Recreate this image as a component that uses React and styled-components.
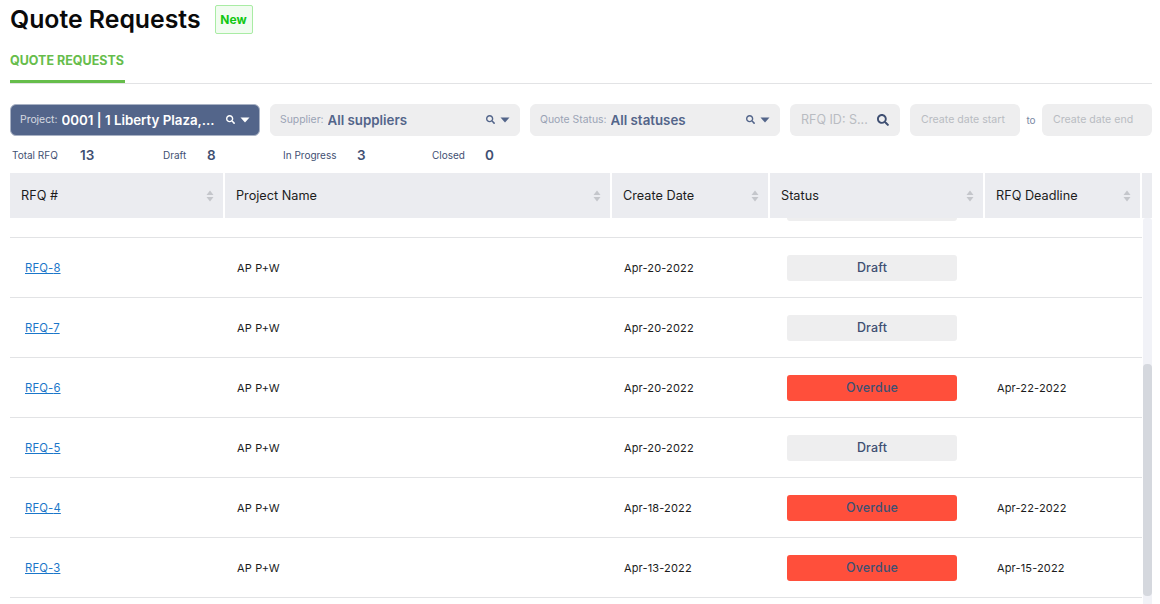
import React, { useLayoutEffect, useRef } from "react";
import styled, { createGlobalStyle } from "styled-components";
import { FaSearch } from "react-icons/fa";

const GlobalStyle = createGlobalStyle`
  html, body { margin: 0; padding: 0; background: #fff; overflow: hidden; }
  body { font-family: Inter, "Liberation Sans", sans-serif; }
`;

const Page = styled.div`
  width: 1142px;
  height: 604px;
  padding-left: 10px;
  overflow: hidden;
`;

const TitleRow = styled.div`
  display: flex;
  align-items: center;
  height: 39px;
`;

const Title = styled.h1`
  margin: 0 0 2px;
  font-size: 24.8px;
  line-height: 36px;
  font-weight: 600;
  color: #0a0a0a;
`;

const NewTag = styled.span`
  margin-left: 14px;
  width: 38px;
  height: 29px;
  box-sizing: border-box;
  display: flex;
  align-items: center;
  justify-content: center;
  background: #f1fcf0;
  border: 1px solid #a9eca4;
  border-radius: 2px;
  color: #12c712;
  font-size: 12px;
  font-weight: 700;
`;

const Tabs = styled.div`
  height: 44px;
  border-bottom: 1px solid #e2e3e5;
  display: flex;
`;

const Tab = styled.div`
  height: 44px;
  box-sizing: border-box;
  padding-top: 14px;
  border-bottom: 3px solid #66bd4b;
  color: #66bd4b;
  font-size: 12.5px;
  line-height: 16px;
  font-weight: 700;
  width: 115px;
  white-space: nowrap;
`;

const Filters = styled.div`
  display: flex;
  align-items: center;
  margin-top: 19px;
  height: 33px;
`;

const Select = styled.div`
  width: ${(p) => p.$w}px;
  height: 32px;
  margin-right: 10px;
  box-sizing: border-box;
  border-radius: 6px;
  padding: 0 9px;
  display: flex;
  align-items: center;
  white-space: nowrap;
  background: ${(p) => (p.$active ? "#53658a" : "#eeeeef")};
  border: 1px solid ${(p) => (p.$active ? "#a9b2c4" : "#eeeeef")};
  color: ${(p) => (p.$active ? "#fff" : "#53658a")};
`;

const SelectLabel = styled.span`
  font-size: 10.4px;
  margin-right: 4px;
  opacity: ${(p) => (p.$active ? 0.75 : 1)};
  color: ${(p) => (p.$active ? "#fff" : "#9aa3b5")};
`;

const SelectValue = styled.span`
  font-size: 13.3px;
  font-weight: 600;
  flex: 1;
  overflow: hidden;
`;

const SearchIcon = styled(FaSearch)`
  width: 9px;
  height: 9px;
  margin-right: 5px;
  flex-shrink: 0;
`;

const Caret = styled.svg`
  width: 10px;
  height: 6px;
  fill: currentColor;
  flex-shrink: 0;
`;

const IdInput = styled.div`
  width: 110px;
  height: 32px;
  margin-right: 10px;
  box-sizing: border-box;
  border-radius: 6px;
  background: #eeeeef;
  padding: 0 11px;
  display: flex;
  align-items: center;
  justify-content: space-between;
  font-size: 12.5px;
  color: #b9bcc2;
  svg { width: 12px; height: 12px; color: #3f4f72; }
`;

const DateInput = styled.div`
  width: 110px;
  height: 32px;
  box-sizing: border-box;
  border-radius: 6px;
  background: #eeeeef;
  padding-left: 11px;
  display: flex;
  align-items: center;
  font-size: 10.6px;
  color: #b9bcc2;
  white-space: nowrap;
`;

const To = styled.span`
  width: 22px;
  text-align: center;
  font-size: 10px;
  color: #7b88a3;
`;

const Stats = styled.div`
  display: flex;
  align-items: center;
  height: 37px;
  padding-left: 2px;
`;

const Stat = styled.div`
  width: ${(p) => p.$w}px;
  display: flex;
  align-items: center;
  color: #3f4f72;
`;

const StatLabel = styled.span`
  font-size: 10px;
  width: ${(p) => p.$w}px;
`;

const StatValue = styled.span`
  font-size: 13.5px;
  font-weight: 600;
`;

const Columns = "213px 385px 156px 213px 155px";

const Head = styled.div`
  display: grid;
  grid-template-columns: ${Columns} 10px;
  column-gap: 2px;
  height: 45px;
`;

const HeadCell = styled.div`
  background: #ebecf0;
  display: flex;
  align-items: center;
  justify-content: space-between;
  padding: 0 9px 0 11px;
  font-size: 12.7px;
  color: #1c1c1c;
`;

const SortIcon = styled.svg`
  width: 8px;
  height: 12px;
  fill: #c4c6cb;
  flex-shrink: 0;
`;

const TableBody = styled.div`
  display: flex;
  height: 386px;
`;

const RowsClip = styled.div`
  width: 1132px;
  height: 386px;
  overflow: hidden;
`;

const Row = styled.div`
  display: grid;
  grid-template-columns: ${Columns};
  column-gap: 2px;
  height: 59px;
  border-bottom: 1px solid #e2e3e5;
  align-items: center;
  font-size: 11px;
  letter-spacing: 0.15px;
  color: #1c1c1c;
`;

const Cell = styled.div`
  padding-left: 12px;
  white-space: nowrap;
`;

const RfqLink = styled.a`
  margin-left: 3px;
  color: #1a76c9;
  font-size: 11.3px;
  text-decoration: underline;
`;

const Badge = styled.div`
  width: 170px;
  height: 26px;
  margin-left: 17px;
  border-radius: 3px;
  display: flex;
  align-items: center;
  justify-content: center;
  font-size: 12.5px;
  font-weight: 500;
  color: #3f4f72;
  background: ${(p) => (p.$overdue ? "#ff4f3b" : "#eeeeef")};
`;

const ScrollTrack = styled.div`
  width: 9px;
  margin-left: 1px;
  height: 386px;
  box-sizing: border-box;
  padding-top: 146px;
  background: #f1f2f7;
  border-radius: 3px 3px 0 0;
`;

const ScrollThumb = styled.div`
  width: 9px;
  height: 232px;
  border-radius: 4px;
  background: #d5d8de;
`;

const rows = [
  { id: 9, date: "Apr-20-2022", status: "Draft" },
  { id: 8, date: "Apr-20-2022", status: "Draft" },
  { id: 7, date: "Apr-20-2022", status: "Draft" },
  { id: 6, date: "Apr-20-2022", status: "Overdue", deadline: "Apr-22-2022" },
  { id: 5, date: "Apr-20-2022", status: "Draft" },
  { id: 4, date: "Apr-18-2022", status: "Overdue", deadline: "Apr-22-2022" },
  { id: 3, date: "Apr-13-2022", status: "Overdue", deadline: "Apr-15-2022" },
  { id: 2, date: "Apr-13-2022", status: "Overdue", deadline: "Apr-15-2022" },
];

const headers = ["RFQ #", "Project Name", "Create Date", "Status", "RFQ Deadline"];

function CaretDown() {
  return (
    <Caret viewBox="0 0 10 6">
      <path d="M0.5 0.5h9L5 5.5z" />
    </Caret>
  );
}

function FilterSelect({ width, label, value, active }) {
  return (
    <Select $w={width} $active={active}>
      <SelectLabel $active={active}>{label}</SelectLabel>
      <SelectValue>{value}</SelectValue>
      <SearchIcon />
      <CaretDown />
    </Select>
  );
}

export default function App() {
  const clip = useRef(null);

  // the list sits scrolled down, RFQ-9 is cut by the table head
  useLayoutEffect(() => {
    clip.current.scrollTop = 40;
  }, []);

  return (
    <Page>
      <GlobalStyle />
      <TitleRow>
        <Title>Quote Requests</Title>
        <NewTag>New</NewTag>
      </TitleRow>
      <Tabs>
        <Tab>QUOTE REQUESTS</Tab>
      </Tabs>
      <Filters>
        <FilterSelect width={250} label="Project:" value="0001 | 1 Liberty Plaza,..." active />
        <FilterSelect width={250} label="Supplier:" value="All suppliers" />
        <FilterSelect width={250} label="Quote Status:" value="All statuses" />
        <IdInput>
          RFQ ID: S...
          <FaSearch />
        </IdInput>
        <DateInput>Create date start</DateInput>
        <To>to</To>
        <DateInput>Create date end</DateInput>
      </Filters>
      <Stats>
        <Stat $w={151}>
          <StatLabel $w={68}>Total RFQ</StatLabel>
          <StatValue>13</StatValue>
        </Stat>
        <Stat $w={120}>
          <StatLabel $w={44}>Draft</StatLabel>
          <StatValue>8</StatValue>
        </Stat>
        <Stat $w={149}>
          <StatLabel $w={74}>In Progress</StatLabel>
          <StatValue>3</StatValue>
        </Stat>
        <Stat $w={80}>
          <StatLabel $w={53}>Closed</StatLabel>
          <StatValue>0</StatValue>
        </Stat>
      </Stats>
      <Head>
        {headers.map((h) => (
          <HeadCell key={h}>
            {h}
            <SortIcon viewBox="0 0 8 12">
              <path d="M4 0.5L7.5 5h-7zM4 11.5L0.5 7h7z" />
            </SortIcon>
          </HeadCell>
        ))}
        <HeadCell />
      </Head>
      <TableBody>
        <RowsClip ref={clip}>
          {rows.map((r) => (
            <Row key={r.id}>
              <Cell>
                <RfqLink href="#">RFQ-{r.id}</RfqLink>
              </Cell>
              <Cell>AP P+W</Cell>
              <Cell>{r.date}</Cell>
              <div>
                <Badge $overdue={r.status === "Overdue"}>{r.status}</Badge>
              </div>
              <Cell>{r.deadline}</Cell>
            </Row>
          ))}
        </RowsClip>
        <ScrollTrack>
          <ScrollThumb />
        </ScrollTrack>
      </TableBody>
    </Page>
  );
}
